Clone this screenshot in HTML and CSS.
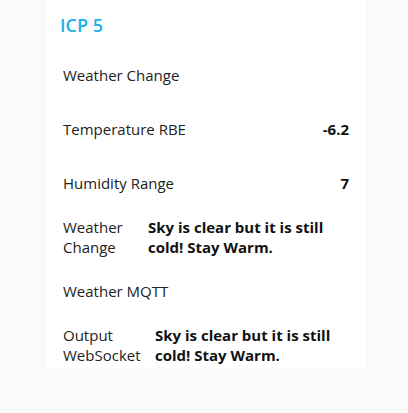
FILE: index.html
```html
<!DOCTYPE html>
<html>
<head>
<meta charset="utf-8">
<link rel="stylesheet" href="styles.css">
</head>
<body>
<div class="group">
  <div class="group-title">ICP 5</div>
  <div class="widgets">
    <div class="widget"><span class="label">Weather Change</span></div>
    <div class="widget"><span class="label">Temperature RBE</span><span class="value">-6.2</span></div>
    <div class="widget"><span class="label">Humidity Range</span><span class="value">7</span></div>
    <div class="widget"><span class="label wrap1">Weather Change</span><span class="value left">Sky is clear but it is still cold! Stay Warm.</span></div>
    <div class="widget"><span class="label">Weather MQTT</span></div>
    <div class="widget"><span class="label wrap2">Output WebSocket</span><span class="value left">Sky is clear but it is still cold! Stay Warm.</span></div>
  </div>
</div>
</body>
</html>
```

FILE: styles.css
```css
html, body {
  margin: 0;
  padding: 0;
  background: #fafafa;
  font-family: "Open Sans", "Noto Sans", sans-serif;
}
.group {
  margin-left: 46px;
  width: 319px;
  background: #ffffff;
}
.group-title {
  height: 45px;
  box-sizing: border-box;
  padding: 13px 0 0 14px;
  font-size: 18px;
  line-height: 24px;
  font-weight: 600;
  color: #1ab1ea;
}
.widgets {
  display: flex;
  flex-direction: column;
  gap: 6px;
  padding-top: 6px;
}
.widget {
  height: 48px;
  display: flex;
  align-items: center;
  justify-content: space-between;
  padding: 0 16px 0 17px;
  font-size: 15px;
  line-height: 20px;
  color: #222;
}
.label {
  flex: 0 1 auto;
}
.value {
  font-weight: bold;
  color: #111;
}
.wrap1 {
  flex: 0 0 85px;
}
.wrap2 {
  flex: 0 0 92px;
}
.value.left {
  flex: 1 1 auto;
  text-align: left;
}
```
